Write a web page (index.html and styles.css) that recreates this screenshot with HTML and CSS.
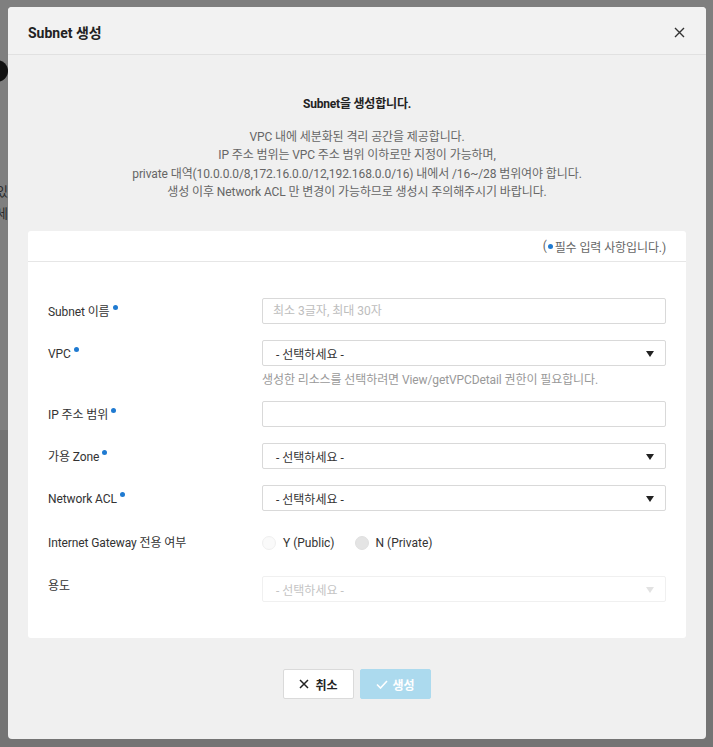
FILE: index.html
```html
<!DOCTYPE html>
<html lang="ko">
<head>
<meta charset="utf-8">
<title>Subnet 생성</title>
<link rel="stylesheet" href="styles.css">
</head>
<body>
<div class="page">
  <div class="page-top">
    <span class="bg-dot"></span>
    <span class="bg-text bg-text-1">있</span>
    <span class="bg-text bg-text-2">세</span>
  </div>
  <div class="page-bottom"></div>

  <div class="modal">
    <div class="modal-header">
      <h1 class="modal-title">Subnet 생성</h1>
      <svg class="close-icon" width="11" height="11" viewBox="0 0 11 11"><path d="M1 1L10 10M10 1L1 10" stroke="#333" stroke-width="1.4" fill="none"/></svg>
    </div>

    <div class="modal-body">
      <div class="intro">
        <p class="intro-title">Subnet을 생성합니다.</p>
        <p class="intro-desc">VPC 내에 세분화된 격리 공간을 제공합니다.<br>IP 주소 범위는 VPC 주소 범위 이하로만 지정이 가능하며,<br>private 대역(10.0.0.0/8,172.16.0.0/12,192.168.0.0/16) 내에서 /16~/28 범위여야 합니다.<br>생성 이후 Network ACL 만 변경이 가능하므로 생성시 주의해주시기 바랍니다.</p>
      </div>

      <div class="card">
        <div class="card-header">(<span class="req req-inline"></span>필수 입력 사항입니다.)</div>
        <div class="form">
          <div class="row">
            <div class="label">Subnet 이름<span class="req"></span></div>
            <div class="control"><input class="input" type="text" placeholder="최소 3글자, 최대 30자"></div>
          </div>
          <div class="row">
            <div class="label">VPC<span class="req"></span></div>
            <div class="control">
              <div class="select"><span>- 선택하세요 -</span><span class="arrow"></span></div>
              <p class="help">생성한 리소스를 선택하려면 View/getVPCDetail 권한이 필요합니다.</p>
            </div>
          </div>
          <div class="row">
            <div class="label">IP 주소 범위<span class="req"></span></div>
            <div class="control"><input class="input" type="text"></div>
          </div>
          <div class="row">
            <div class="label">가용 Zone<span class="req"></span></div>
            <div class="control"><div class="select"><span>- 선택하세요 -</span><span class="arrow"></span></div></div>
          </div>
          <div class="row">
            <div class="label">Network ACL<span class="req"></span></div>
            <div class="control"><div class="select"><span>- 선택하세요 -</span><span class="arrow"></span></div></div>
          </div>
          <div class="row row-radio">
            <div class="label label-radio">Internet Gateway 전용 여부</div>
            <div class="control radios">
              <label class="radio"><span class="radio-circle radio-light"></span>Y (Public)</label>
              <label class="radio"><span class="radio-circle radio-gray"></span>N (Private)</label>
            </div>
          </div>
          <div class="row row-last">
            <div class="label label-top">용도</div>
            <div class="control"><div class="select select-disabled"><span>- 선택하세요 -</span><span class="arrow"></span></div></div>
          </div>
        </div>
      </div>

      <div class="actions">
        <button class="btn btn-cancel" type="button"><svg width="10" height="10" viewBox="0 0 10 10"><path d="M1 1L9 9M9 1L1 9" stroke="#222" stroke-width="1.5" fill="none"/></svg>취소</button>
        <button class="btn btn-create" type="button"><svg width="12" height="9" viewBox="0 0 12 9"><path d="M1 4.5L4.5 8L11 1" stroke="#fff" stroke-width="1.6" fill="none"/></svg>생성</button>
      </div>
    </div>
  </div>
</div>
</body>
</html>
```

FILE: styles.css
```css
* { box-sizing: border-box; }

html, body {
  margin: 0;
  padding: 0;
}

body {
  width: 713px;
  height: 747px;
  overflow: hidden;
  font-family: Roboto, "Noto Sans CJK KR", sans-serif;
  font-size: 12px;
  color: #333;
}

.page {
  position: relative;
  width: 713px;
  height: 747px;
}

.page-top {
  position: relative;
  height: 430px;
  background: #7f7f7f;
}

.page-bottom {
  height: 317px;
  background: #747474;
}

.bg-dot {
  position: absolute;
  left: -14px;
  top: 60px;
  width: 22px;
  height: 22px;
  border-radius: 50%;
  background: #111;
}

.bg-text {
  position: absolute;
  left: -4px;
  font-size: 13px;
  color: #2a2a2a;
}

.bg-text-1 { top: 181px; }
.bg-text-2 { top: 203px; }

.modal {
  position: absolute;
  left: 8px;
  top: 7px;
  width: 698px;
  height: 732px;
  background: #f0f0f0;
  border-radius: 4px;
  display: flex;
  flex-direction: column;
}

.modal-header {
  height: 48px;
  padding: 0 20px;
  display: flex;
  align-items: center;
  justify-content: space-between;
  border-bottom: 1px solid #e1e1e1;
  background: #f2f2f2;
  border-radius: 4px 4px 0 0;
}

.modal-title {
  margin: 0;
  font-size: 14px;
  font-weight: 700;
  color: #222;
  padding-top: 2px;
}

.close-icon {
  margin-right: 1px;
  margin-top: 4px;
}

.modal-body {
  padding: 0 20px;
}

.intro {
  text-align: center;
  padding-top: 40px;
}

.intro-title {
  margin: 0;
  font-size: 12px;
  font-weight: 700;
  color: #222;
  line-height: 18px;
  letter-spacing: -0.2px;
}

.intro-desc {
  margin: 15px 0 0;
  font-size: 12px;
  line-height: 18.3px;
  color: #666;
  letter-spacing: -0.1px;
}

.card {
  margin-top: 30px;
  background: #fff;
  border-radius: 3px;
}

.card-header {
  height: 31px;
  padding: 0 20px;
  display: flex;
  align-items: center;
  justify-content: flex-end;
  border-bottom: 1px solid #e6e6e6;
  color: #666;
  font-size: 12px;
  letter-spacing: -0.1px;
}

.req {
  display: inline-block;
  width: 5px;
  height: 5px;
  border-radius: 50%;
  background: #1f7ad1;
  margin-left: 3px;
  vertical-align: 6px;
}

.req-inline {
  margin: 0 2px 0 1px;
  vertical-align: 5px;
}

.form {
  padding: 36px 20px 36px 20px;
}

.row {
  display: flex;
  margin-bottom: 16px;
}

.row-last { margin-bottom: 0; }

.label {
  width: 214px;
  flex-shrink: 0;
  height: 26px;
  line-height: 28px;
  color: #333;
  letter-spacing: -0.1px;
}

.label-top {
  line-height: 20px;
}

.control {
  flex: 1;
}

.input {
  display: block;
  width: 100%;
  height: 26px;
  border: 1px solid #d9d9d9;
  border-radius: 2px;
  padding: 0 10px;
  font-family: Roboto, "Noto Sans CJK KR", sans-serif;
  font-size: 12px;
  color: #333;
  background: #fff;
  outline: none;
}

.input::placeholder {
  color: #bdbdbd;
}

.select {
  height: 26px;
  border: 1px solid #d9d9d9;
  border-radius: 2px;
  padding: 0 11px 0 13px;
  display: flex;
  align-items: center;
  justify-content: space-between;
  color: #333;
  background: #fff;
}

.arrow {
  width: 0;
  height: 0;
  border-left: 4px solid transparent;
  border-right: 4px solid transparent;
  border-top: 6px solid #222;
  margin-top: 1px;
}

.select-disabled {
  border-color: #f0f0f0;
  color: #c4c4c4;
}

.select-disabled .arrow {
  border-top-color: #e2e2e2;
}

.help {
  margin: 5px 0 -4px;
  line-height: 18px;
  color: #999;
  letter-spacing: -0.1px;
}

.row-radio {
  height: 30px;
  margin-bottom: 19px;
  align-items: center;
  padding-top: 2px;
}

.label-radio {
  height: 30px;
  line-height: 30px;
}

.radios {
  display: flex;
  align-items: center;
  gap: 20px;
}

.radio {
  display: flex;
  align-items: center;
  color: #333;
  font-size: 12px;
}

.radio-circle {
  width: 14px;
  height: 14px;
  border-radius: 50%;
  margin-right: 7px;
}

.radio-light {
  background: #fafafa;
  border: 1px solid #efefef;
}

.radio-gray {
  background: #e4e4e4;
  border: 1px solid #e0e0e0;
}

.actions {
  margin-top: 31px;
  display: flex;
  justify-content: center;
  gap: 6px;
}

.btn {
  width: 71px;
  height: 30px;
  display: flex;
  align-items: center;
  justify-content: center;
  gap: 6px;
  font-family: Roboto, "Noto Sans CJK KR", sans-serif;
  font-size: 12px;
  font-weight: 700;
  border-radius: 2px;
  padding: 0;
  cursor: pointer;
}

.btn-cancel {
  background: #fff;
  border: 1px solid #dadada;
  color: #222;
}

.btn-create {
  background: #acdaee;
  border: 1px solid #acdaee;
  color: #fff;
  gap: 4px;
}
```
